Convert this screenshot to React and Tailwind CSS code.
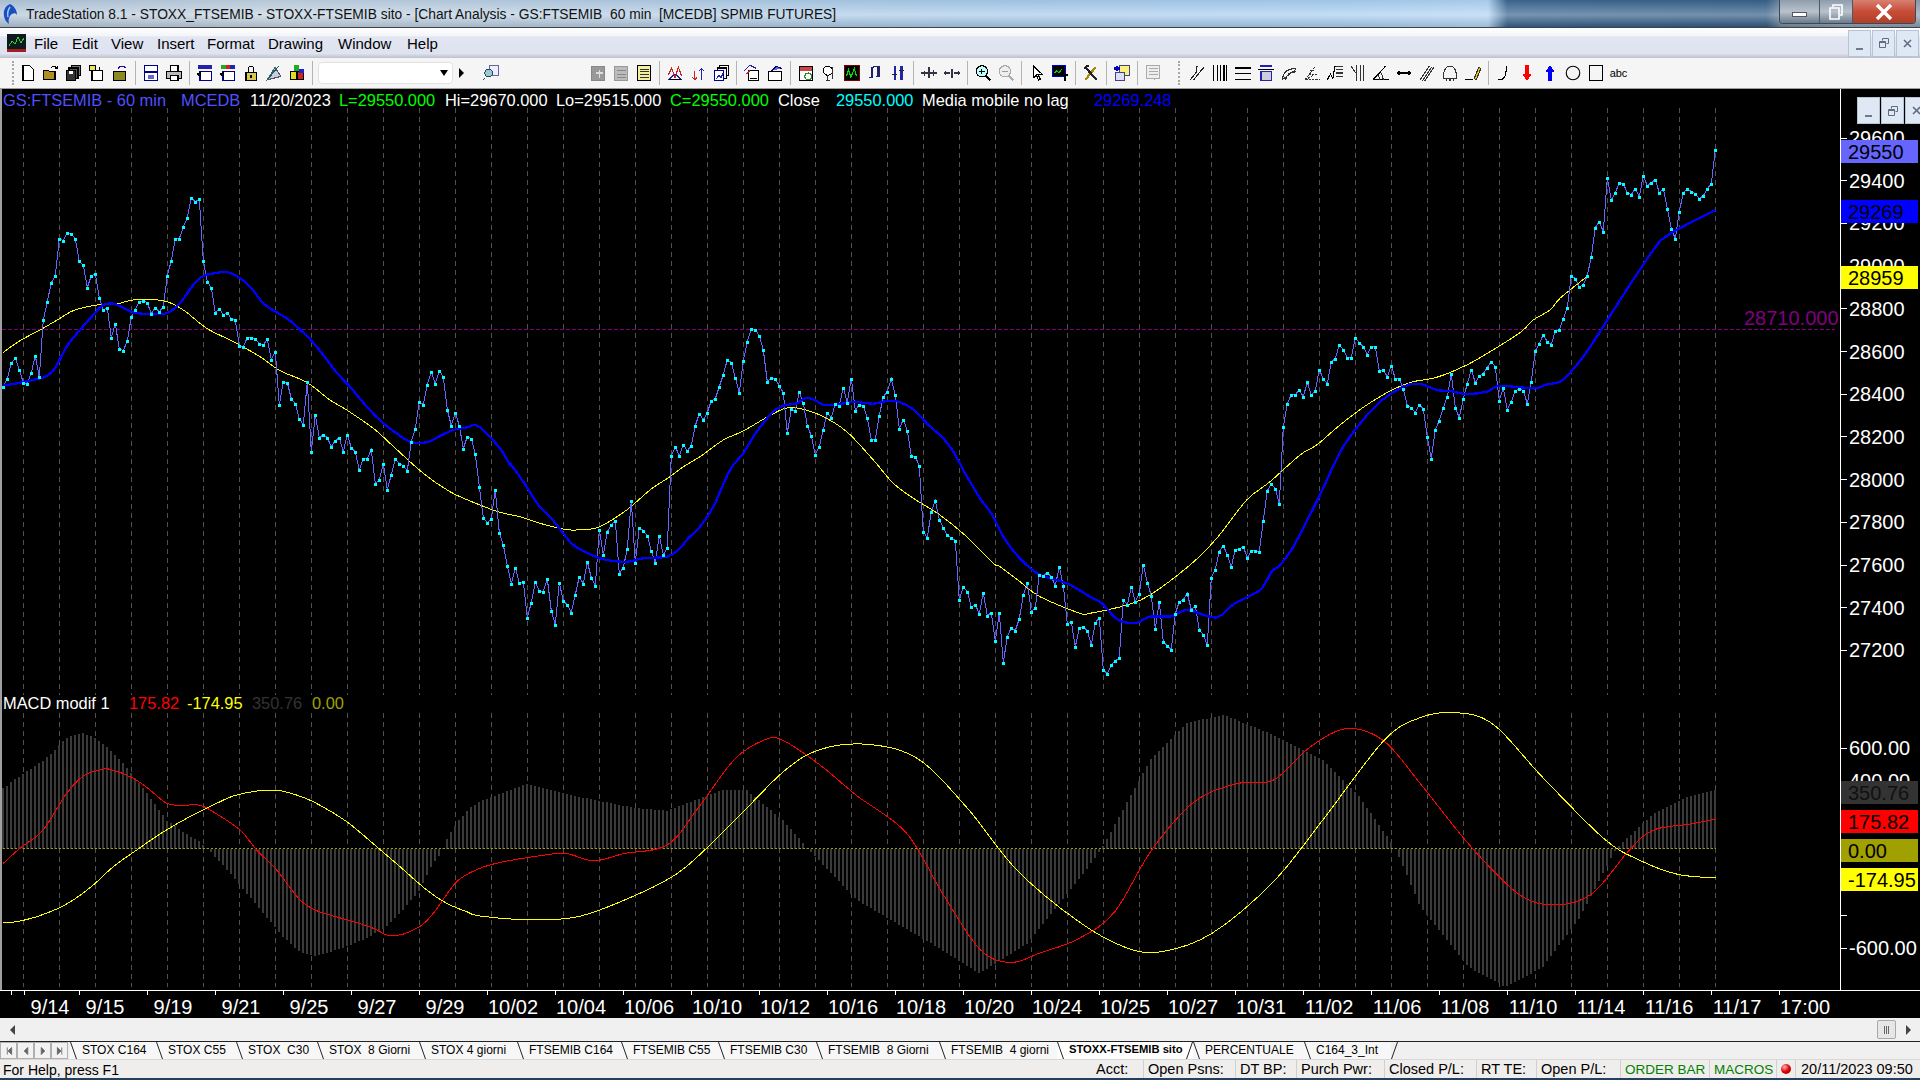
import React from 'react';

// zoom crops were 3x, so these helpers turn traced crop values back into page pixels
const fromZoom = (x0, y0, pts) => pts.map(([x, y]) => [x0 + x / 3, y0 + y / 3]);
const fromOverview = (pts) => pts.map(([x, y]) => [x * 1.2245, y * 1.2245]);
const seg = (x0, y0, start, ys) => ys.map((y, i) => [x0 + (start + 12 * i) / 3, y0 + y / 3]);
const toPoints = (pts) => pts.map(([x, y]) => `${x.toFixed(1)},${y.toFixed(1)}`).join(' ');

// catmull-rom through the traced points, the averages are smooth in the chart
const smooth = (raw) => {
  const pts = raw.filter((p, i) => i === 0 || p[0] > raw[i - 1][0]);
  let d = `M${pts[0][0].toFixed(1)} ${pts[0][1].toFixed(1)}`;
  for (let i = 0; i < pts.length - 1; i++) {
    const p0 = pts[Math.max(i - 1, 0)];
    const p1 = pts[i];
    const p2 = pts[i + 1];
    const p3 = pts[Math.min(i + 2, pts.length - 1)];
    const c1x = p1[0] + (p2[0] - p0[0]) / 6;
    const c1y = p1[1] + (p2[1] - p0[1]) / 6;
    const c2x = p2[0] - (p3[0] - p1[0]) / 6;
    const c2y = p2[1] - (p3[1] - p1[1]) / 6;
    d += `C${c1x.toFixed(1)} ${c1y.toFixed(1)} ${c2x.toFixed(1)} ${c2y.toFixed(1)} ${p2[0].toFixed(1)} ${p2[1].toFixed(1)}`;
  }
  return d;
};

const price = [
  ...seg(0, 180, 10, [620, 596, 548, 535, 569, 608, 611, 578, 527, 591, 420, 365, 308, 287, 176, 182, 158, 161, 176, 244, 255, 323, 287, 281, 353, 389, 383, 473, 431, 507, 512, 483, 410, 389, 365, 362, 368, 401, 383, 395, 380, 287, 242, 176, 176, 141, 113, 53, 65, 57, 242, 305, 323, 398, 386, 404, 398, 416, 420, 497, 500, 473, 473, 477, 491, 495, 477, 539, 515, 675, 605, 608, 656, 671, 716, 734, 605, 816, 704, 773, 764, 773, 800, 782, 773, 815, 764, 803, 815, 870, 836, 836, 809, 911, 899, 851, 929, 884, 836, 851, 857, 872, 785, 746, 665, 674, 614, 575, 611, 572, 590, 689, 737, 698, 737, 806, 770, 776, 821]),
  ...seg(0, 340, 1438, [440, 533, 548, 536, 450, 578, 614, 677, 731, 683, 729]),
  ...seg(500, 310, 70, [816, 923, 878, 816, 843, 845, 806, 902, 944, 818, 872, 884, 908, 854, 800, 821, 755, 803, 827, 659, 734, 665, 645, 632, 791, 773, 716, 572, 758, 653, 662, 677, 722, 758, 677, 734, 713, 437, 410, 437, 404, 422, 407, 347, 311, 329, 308, 272, 266, 230, 194, 149, 158, 203, 248, 152, 95, 56, 59, 77, 119, 215, 203, 206, 227, 248, 368, 298, 302, 247, 278, 347, 377, 434, 410, 359, 308, 323, 281, 287, 233, 278, 206, 302, 284, 287, 323, 389, 389, 317, 260, 245, 206, 254, 356, 329, 362, 437, 440, 467, 665, 683, 605, 572, 629, 653, 675, 683, 692, 870, 830, 845, 890, 884, 911, 848, 917, 908, 992, 908, 1058, 980, 953, 962, 926]),
  ...seg(1000, 310, 70, [855, 818, 905, 893, 794, 797, 788, 800, 827, 770, 827, 941, 935, 1011, 953, 950, 962, 1005, 938, 923, 1079, 1092, 1065, 1053, 1043, 869, 885, 830, 875, 851, 764, 818, 857, 956, 875, 995, 1008, 1019, 911, 875, 869, 851, 899, 887, 959, 974, 1005, 803, 779, 725, 707, 734, 770, 719, 716, 710, 743, 722, 722, 725, 632, 542, 521, 536, 581, 350, 281, 254, 254, 239, 260, 217, 254, 242, 179, 206, 221, 155, 146, 104, 119, 143, 143, 83, 98, 110, 134, 110, 110, 182, 179, 200, 167, 206, 206, 236, 287, 293, 308, 284, 296, 380, 446, 359, 332, 293, 260, 191, 293, 323, 266, 221, 179, 218, 197, 191, 173, 155, 170, 272, 233, 299, 275, 242, 236]),
  ...seg(1300, 130, 670, [782, 821, 755, 662, 641, 614, 635, 644, 602, 600, 566, 533, 437, 446, 470, 464, 437, 380, 293, 275, 305, 143, 209, 188, 158, 161, 188, 194, 176, 200, 137, 167, 158, 149, 188, 176, 236, 296, 326, 245, 188, 176, 185, 191, 206, 197, 176, 161, 60]),
];

const blueMa = [
  ...fromZoom(0, 180, [[10, 616], [40, 612], [70, 606], [120, 595], [140, 588], [165, 565], [200, 500], [240, 450], [275, 410], [310, 375], [345, 372], [400, 397], [450, 402], [490, 402], [510, 395], [540, 370], [580, 315], [610, 288], [650, 279], [680, 276], [710, 288], [750, 320], [790, 370], [830, 397], [870, 422], [930, 478], [970, 525], [1010, 578], [1050, 620], [1100, 680], [1150, 730], [1190, 760], [1230, 785], [1280, 787], [1320, 768], [1360, 750], [1400, 742], [1425, 735]]),
  ...fromZoom(0, 340, [[1450, 270], [1500, 325], [1530, 375]]),
  ...fromZoom(500, 310, [[0, 415], [30, 460], [70, 515], [115, 585], [150, 620], [190, 670], [220, 705], [260, 728], [300, 745], [340, 753], [385, 755], [430, 745], [500, 740], [535, 720], [565, 685], [600, 650], [640, 590], [690, 480], [730, 430], [770, 365], [820, 305], [850, 287], [890, 280], [915, 265], [940, 268], [970, 284], [1010, 284], [1060, 276], [1120, 281], [1160, 273], [1195, 275], [1240, 298], [1280, 340], [1330, 385], [1360, 425], [1390, 480], [1440, 565], [1475, 612], [1510, 680]]),
  ...fromZoom(1000, 310, [[0, 650], [55, 740], [115, 792], [200, 820], [270, 860], [305, 880], [355, 930], [410, 938], [450, 920], [515, 919], [560, 900], [630, 920], [660, 918], [705, 880], [780, 840], [815, 785], [840, 765], [880, 710], [960, 555], [1030, 410], [1130, 285], [1210, 230], [1260, 222], [1310, 240], [1350, 243], [1400, 252], [1460, 245], [1495, 228], [1560, 232]]),
  ...fromZoom(1300, 130, [[710, 775], [735, 765], [780, 755], [810, 728], [850, 680], [900, 605], [970, 495], [1060, 360], [1100, 318], [1190, 268], [1246, 240]]),
];

const yellowMa = [
  ...fromZoom(0, 180, [[10, 517], [60, 482], [120, 450], [180, 415], [220, 392], [290, 375], [350, 372], [400, 360], [490, 362], [550, 390], [620, 445], [700, 485], [780, 530], [840, 572], [920, 607], [990, 660], [1040, 690]]),
  ...fromZoom(0, 340, [[1120, 265], [1170, 310], [1270, 400], [1350, 455], [1420, 487], [1500, 517]]),
  ...fromZoom(500, 310, [[0, 607], [60, 620], [120, 640], [200, 659], [260, 658], [300, 650], [380, 600], [450, 540], [510, 500], [550, 470], [600, 440], [670, 390], [730, 363], [800, 322], [850, 297], [885, 293], [960, 315], [1040, 365], [1120, 450], [1180, 520], [1240, 565], [1320, 615], [1400, 680], [1480, 760]]),
  ...fromZoom(1000, 310, [[0, 770], [60, 815], [120, 860], [240, 910], [270, 910], [380, 885], [450, 855], [570, 765], [650, 685], [740, 570], [810, 515], [900, 435], [950, 405], [1020, 345], [1100, 285], [1180, 238], [1240, 215], [1310, 202], [1400, 165], [1470, 125], [1560, 68]]),
  ...fromZoom(1300, 130, [[700, 570], [750, 540], [780, 505], [860, 440]]),
];

const histEnvelope = [
  ...fromZoom(0, 690, [[10, 296], [40, 272], [80, 245], [130, 212], [165, 182], [185, 155], [210, 140], [250, 130], [290, 145], [330, 178], [380, 230], [420, 280], [460, 335], [500, 390], [550, 425], [600, 455], [625, 476], [660, 515], [700, 560], [750, 620], [800, 680], [850, 740], [900, 785], [940, 798], [980, 790], [1040, 770], [1100, 745], [1160, 710], [1210, 660], [1260, 600], [1300, 520], [1320, 495], [1340, 450], [1370, 400], [1410, 355], [1440, 335]]),
  ...fromOverview([[430, 640], [470, 650], [520, 660], [545, 662], [590, 645], [610, 645], [640, 670], [660, 693], [700, 735], [760, 770], [800, 795], [840, 770], [880, 720], [900, 693], [940, 620], [970, 590], [1000, 584], [1040, 600], [1080, 620], [1110, 650], [1140, 693], [1160, 740], [1200, 790], [1230, 806], [1260, 790], [1290, 750], [1320, 693], [1350, 665], [1380, 650], [1401, 645]]),
];

const macdRed = [
  ...fromZoom(0, 690, [[10, 520], [60, 475], [120, 430], [150, 390], [200, 310], [250, 258], [300, 240], [330, 238], [400, 265], [450, 300], [500, 340], [540, 346], [600, 346], [650, 372], [720, 420], [770, 480], [830, 540], [900, 630], [950, 662], [1000, 678], [1060, 695], [1120, 715], [1175, 738], [1250, 715], [1300, 670], [1370, 575], [1440, 535]]),
  ...fromOverview([[410, 704], [440, 699], [462, 697], [485, 703], [510, 697], [545, 690], [570, 660], [600, 620], [625, 604], [640, 605], [670, 625], [700, 650], [740, 680], [770, 730], [800, 775], [825, 786], [850, 778], [880, 767], [910, 745], [940, 695], [975, 655], [1010, 640], [1040, 637], [1070, 610], [1100, 595], [1130, 605], [1160, 640], [1200, 690], [1240, 730], [1270, 739], [1300, 730], [1330, 695], [1350, 678], [1380, 673], [1401, 669]]),
];

const macdYellow = [
  ...fromZoom(0, 690, [[10, 697], [50, 695], [110, 680], [170, 657], [220, 630], [280, 585], [340, 530], [410, 480], [480, 432], [560, 385], [640, 345], [700, 318], [770, 303], [830, 301], [880, 312], [940, 335], [1040, 395], [1130, 470], [1200, 530], [1280, 600], [1340, 640], [1400, 665], [1440, 678]]),
  ...fromOverview([[430, 751], [470, 749], [510, 735], [555, 712], [600, 670], [640, 630], [670, 612], [710, 608], [750, 620], [790, 660], [830, 710], [880, 752], [920, 774], [950, 777], [990, 762], [1040, 720], [1080, 670], [1130, 605], [1160, 586], [1190, 582], [1220, 592], [1260, 635], [1310, 685], [1340, 703], [1370, 714], [1401, 717]]),
];

const interpolate = (pts, x) => {
  for (let i = 1; i < pts.length; i++) {
    if (x <= pts[i][0]) {
      const [x0, y0] = pts[i - 1];
      const [x1, y1] = pts[i];
      return y0 + ((y1 - y0) * (x - x0)) / (x1 - x0);
    }
  }
  return pts[pts.length - 1][1];
};

const ZERO_Y = 848.7;
const histPath = Array.from({ length: 429 }, (_, i) => {
  const x = 3.33 + 4 * i;
  return `M${Math.round(x)} ${ZERO_Y}V${interpolate(histEnvelope, Math.max(x, 4)).toFixed(1)}`;
}).join('');

const gridXs = Array.from({ length: 48 }, (_, i) => 23.33 + 36 * i);

const priceTicks = [29600, 29400, 29200, 29000, 28800, 28600, 28400, 28200, 28000, 27800, 27600, 27400, 27200].map((p) => ({
  label: String(p),
  y: 138 + (29600 - p) * 0.2135,
}));
const macdTicks = [
  { label: '600.00', y: 748 },
  { label: '400.00', y: 781 },
  { label: '', y: 915 },
  { label: '-600.00', y: 948 },
];
const valueBoxes = [
  { text: '29550', y: 140, cls: 'bg-[#6666ff] text-black' },
  { text: '29269', y: 200, cls: 'bg-[#0000ff] text-black' },
  { text: '28959', y: 266, cls: 'bg-[#ffff00] text-black' },
  { text: '350.76', y: 781, cls: 'bg-[#333333] text-[#111111]' },
  { text: '175.82', y: 810, cls: 'bg-[#ff0000] text-black' },
  { text: '0.00', y: 839, cls: 'bg-[#a0a000] text-black' },
  { text: '-174.95', y: 868, cls: 'bg-[#ffff00] text-black' },
];

const dates = ['9/15', '9/19', '9/21', '9/25', '9/27', '9/29', '10/02', '10/04', '10/06', '10/10', '10/12', '10/16', '10/18', '10/20', '10/24', '10/25', '10/27', '10/31', '11/02', '11/06', '11/08', '11/10', '11/14', '11/16', '11/17', '17:00'];

const legendCells = [
  ['w-[178px] text-[#5050ff]', 'GS:FTSEMIB - 60 min'],
  ['w-[69px] text-[#5050ff]', 'MCEDB'],
  ['w-[89px] text-white', '11/20/2023'],
  ['w-[106px] text-[#00ff00]', 'L=29550.000'],
  ['w-[111px] text-white', 'Hi=29670.000'],
  ['w-[114px] text-white', 'Lo=29515.000'],
  ['w-[108px] text-[#00ff00]', 'C=29550.000'],
  ['w-[58px] text-white', 'Close'],
  ['w-[86px] text-[#00ffff]', '29550.000'],
  ['w-[172px] text-white', 'Media mobile no lag'],
  ['w-[90px] text-[#0000ff]', '29269.248'],
];
const macdLegend = [
  ['w-[126px] text-white', 'MACD modif 1'],
  ['w-[58px] text-[#ff0000]', '175.82'],
  ['w-[65px] text-[#ffff00]', '-174.95'],
  ['w-[60px] text-[#333333]', '350.76'],
  ['w-[40px] text-[#a0a000]', '0.00'],
];

const menus = [
  ['w-[38px]', 'File'],
  ['w-[39px]', 'Edit'],
  ['w-[46px]', 'View'],
  ['w-[50px]', 'Insert'],
  ['w-[61px]', 'Format'],
  ['w-[70px]', 'Drawing'],
  ['w-[69px]', 'Window'],
  ['w-[40px]', 'Help'],
];

const tabs = [
  ['w-[86px]', 'STOX C164'],
  ['w-[80px]', 'STOX C55'],
  ['w-[81px]', 'STOX  C30'],
  ['w-[102px]', 'STOX  8 Giorni'],
  ['w-[98px]', 'STOX 4 giorni'],
  ['w-[104px]', 'FTSEMIB C164'],
  ['w-[97px]', 'FTSEMIB C55'],
  ['w-[98px]', 'FTSEMIB C30'],
  ['w-[123px]', 'FTSEMIB  8 Giorni'],
  ['w-[118px]', 'FTSEMIB  4 giorni'],
  ['w-[136px]', 'STOXX-FTSEMIB sito', true],
  ['w-[111px]', 'PERCENTUALE'],
  ['w-[87px]', 'C164_3_Int'],
];

const statusCells = [
  ['w-[52px] text-black', 'Acct:'],
  ['w-[92px] text-black', 'Open Psns:'],
  ['w-[61px] text-black', 'DT BP:'],
  ['w-[88px] text-black', 'Purch Pwr:'],
  ['w-[92px] text-black', 'Closed P/L:'],
  ['w-[60px] text-black', 'RT TE:'],
  ['w-[84px] text-black', 'Open P/L:'],
  ['w-[89px] text-[#008000] text-[13.5px]', 'ORDER BAR'],
  ['w-[67px] text-[#008000] text-[13.5px]', 'MACROS'],
];

function Ic({ children }) {
  return (
    <div className="w-[23px] h-full flex items-center justify-center shrink-0">
      <svg width="18" height="18" viewBox="0 0 16 16" fill="none" stroke="#000" strokeWidth="1" shapeRendering="crispEdges">
        {children}
      </svg>
    </div>
  );
}

function Sep() {
  return (
    <div className="w-[8px] h-full flex items-center justify-center shrink-0">
      <div className="w-px h-[24px] bg-[#b4b4b4]" />
    </div>
  );
}

function Grip() {
  return <div className="w-[2px] h-[24px] shrink-0 border-l-2 border-dotted border-[#a8a8a8]" />;
}

const ICONS = {
  doc: <path d="M3.5 1.5h6l3 3v10h-9z" fill="#fff" />,
  open: <><path d="M1.5 13.5v-8h4l1 1h5v7z" fill="#b09020" /><path d="M8 3.5c1.5-2 4-2 5 .5M13.5 2v2h-2" /></>,
  save: <><rect x="5.5" y="1.5" width="8" height="9" fill="#777" /><rect x="3.5" y="3.5" width="8" height="9" fill="#555" /><rect x="1.5" y="5.5" width="8" height="9" fill="#333" /><rect x="3.5" y="6" width="4" height="3" fill="#fff" stroke="none" /></>,
  notes: <><path d="M3.5 5.5h9v9h-9z" fill="#fff" /><path d="M1.5 1.5h5v4h-5z" fill="#f0e060" /><path d="M10 5V2.5" /></>,
  box: <><rect x="2.5" y="6.5" width="10" height="8" fill="#8a8a20" /><path d="M6 4c2-2.5 5-2.5 7-.5" stroke="#20a" /></>,
  preview: <><rect x="2.5" y="1.5" width="11" height="13" fill="#fff" stroke="#008" /><rect x="2.5" y="6" width="11" height="2" fill="#008" stroke="none" /><rect x="5" y="10" width="6" height="3" fill="#66c" stroke="none" /></>,
  printer: <><path d="M4.5 1.5h7v5h-7z" fill="#fff" /><path d="M1.5 6.5h13v6h-13z" fill="#bbb" /><path d="M4.5 10.5h7v4h-7z" fill="#fff" /></>,
  winA: <><rect x="3.5" y="6.5" width="10" height="8" fill="#fff" stroke="#008" /><rect x="2" y="1" width="12" height="3" fill="#22a" stroke="none" /><path d="M1 9l3-2v4z" fill="#008" /></>,
  winB: <><rect x="3.5" y="6.5" width="10" height="8" fill="#fff" stroke="#008" /><rect x="2" y="1" width="4" height="3" fill="#2a2" stroke="none" /><rect x="6" y="1" width="4" height="3" fill="#c22" stroke="none" /><rect x="10" y="1" width="4" height="3" fill="#22a" stroke="none" /><path d="M1 9l3-2v4z" fill="#008" /></>,
  lock: <><rect x="3.5" y="7.5" width="9" height="7" fill="#d8c850" /><path d="M5.5 7.5v-3a2.5 2.5 0 0 1 5 0v3" /><rect x="7" y="10" width="2" height="2" fill="#000" stroke="none" /></>,
  draw: <><path d="M2 14L9 3l5 8z" fill="#ccd" stroke="#556" /><path d="M3 13l9-11" stroke="#066" /></>,
  cubes: <><rect x="5" y="1" width="5" height="6" fill="#2a2" stroke="none" /><rect x="2" y="7" width="6" height="7" fill="#dd2" stroke="#000" /><rect x="8" y="7" width="6" height="7" fill="#c22" stroke="#000" /><rect x="10" y="4" width="4" height="4" fill="#22c" stroke="none" /></>,
  search: <><rect x="6.5" y="1.5" width="8" height="9" fill="#eef" stroke="#669" /><circle cx="6" cy="8" r="3.5" fill="#9cc" stroke="#246" /><path d="M3 12l-2 2" stroke="#246" /></>,
  grayA: <><rect x="2.5" y="2.5" width="11" height="12" fill="#999" stroke="#888" /><path d="M9 5v7M6 8h6" stroke="#ddd" /></>,
  grayB: <><rect x="2.5" y="2.5" width="11" height="12" fill="#bbb" stroke="#999" /><path d="M4 6h8M4 9h8M4 12h8" stroke="#888" /></>,
  calc: <><rect x="2.5" y="1.5" width="11" height="13" fill="#f4f0a0" /><path d="M4 4.5h8M4 7h8M4 9.5h8M4 12h8" stroke="#333" /></>,
  chartA: <><path d="M2 14h12" /><path d="M2 10l3-6 3 8 3-9 3 8" stroke="#c22" /><path d="M2 14l6-5 6 5" stroke="#22a" /></>,
  arrowsUD: <><path d="M5 6v8M3 12l2 2 2-2" stroke="#c22" /><path d="M11 14V4M9 6l2-2 2 2" stroke="#22a" /></>,
  pages: <><rect x="6.5" y="1.5" width="8" height="9" fill="#fff" /><rect x="4.5" y="3.5" width="8" height="9" fill="#eef" /><rect x="2.5" y="5.5" width="8" height="9" fill="#fff" stroke="#008" /><path d="M4 13l2-3 2 2 2-4" stroke="#22a" /></>,
  chartPage: <><rect x="4.5" y="5.5" width="9" height="9" fill="#fff" /><path d="M1 6l5-5 6 3" stroke="#22a" /><path d="M3 9l3-3" stroke="#c22" /><path d="M6 13h6" /></>,
  folderUp: <><rect x="2.5" y="6.5" width="11" height="8" fill="#fff" /><path d="M5 6l4-4 5 2" stroke="#008" fill="#66c" /></>,
  cal: <><rect x="2.5" y="2.5" width="11" height="12" fill="#fff" /><rect x="3" y="3" width="10" height="3" fill="#c44" stroke="none" /><circle cx="10" cy="11" r="3" fill="#fff" stroke="#383" /></>,
  bulb: <><circle cx="7" cy="6" r="4" fill="#fff" /><path d="M7 10v5M5 15h4M11 3v10" stroke="#333" /></>,
  blackChart: <><rect x="1" y="1" width="14" height="14" fill="#000" stroke="#700" /><path d="M3 11l2-6 2 7 3-8 2 7" stroke="#0d0" /></>,
  music: <><path d="M5 3v9M11 2v9" stroke="#226" strokeWidth="2" /><path d="M3 12h3M9 11h3M5 3l6-1" stroke="#226" /></>,
  fork: <><path d="M5 2v12M11 2v12" stroke="#22a" strokeWidth="2" /><path d="M3 9h4M9 6h4" stroke="#222" /></>,
  hTicks: <path d="M1 8h14M4 6v5M8 3v9M12 5v6" stroke="#334" />,
  hArrows: <path d="M1 8h5M10 8h5M3 6L1 8l2 2M13 6l2 2-2 2M8 4v8" stroke="#334" />,
  zoomIn: <><circle cx="7" cy="6.5" r="5" fill="#bff" stroke="#000" /><path d="M4.5 6.5h5M7 4v5" stroke="#000" /><path d="M10.5 10.5l4 4" strokeWidth="2" /></>,
  zoomOut: <><circle cx="7" cy="6.5" r="5" fill="#eee" stroke="#aaa" /><path d="M4.5 6.5h5" stroke="#999" /><path d="M10.5 10.5l4 4" stroke="#aaa" strokeWidth="2" /></>,
  pointer: <path d="M4.5 1.5v11l3-2.5 2 4.5 1.5-1-2-4 3.5-.5z" fill="#fff" />,
  chartT: <><rect x="1" y="1" width="12" height="10" fill="#000" stroke="#00c" /><path d="M3 8l2-2 2 2 3-4" stroke="#0d0" /><path d="M10 10h5M12.5 10v5" strokeWidth="2" /></>,
  tools: <><path d="M3 14L12 3" stroke="#a80" strokeWidth="2" /><path d="M3 3l10 11" stroke="#222" strokeWidth="2" /><path d="M2 4l4-3" stroke="#222" strokeWidth="2" /></>,
  docPlus: <><rect x="5.5" y="1.5" width="9" height="9" fill="#f8f080" stroke="#447" /><rect x="2.5" y="7.5" width="8" height="7" fill="#ddf" stroke="#447" /><path d="M1 4h5M3.5 1.5v5" stroke="#00c" strokeWidth="2" /></>,
  msg: <><rect x="2.5" y="1.5" width="11" height="11" fill="#eee" stroke="#aaa" /><path d="M4 4h8M4 6.5h8M4 9h8M9 12.5v2" stroke="#aaa" /></>,
  pen: <path d="M2 14L7 8l1-6M5 14l9-11" stroke="#222" />,
  vBars: <path d="M2.5 1v14M5.5 1v14M8.5 1v14M11.5 1v14M14 1v14" />,
  hBars: <path d="M1 3.5h14M1 8.5h14M1 13.5h14" />,
  fib: <><rect x="3" y="1" width="10" height="2" fill="#22a" stroke="none" /><path d="M1 4.5h14" /><rect x="3.5" y="6.5" width="9" height="8" fill="#ccd" stroke="#22a" /></>,
  arcs: <path d="M2 14c1-8 7-10 12-10M5 14c1-5 5-7 9-7M2 14L14 5" stroke="#333" />,
  fan: <path d="M2 14h13M2 14L11 2M2 14l7-4M6 6h4M5 9h7" stroke="#333" strokeDasharray="2 1" />,
  speed: <><path d="M1 14l3-5 2 4 2-11" /><path d="M9 2h6M9 5h6M9 8h6M9 11h6" stroke="#333" /></>,
  andrew: <path d="M2 2l4 6M7 1v14M10 1v14M13 1v14" stroke="#333" />,
  angle: <><path d="M1 14h14M1 14L12 2" /><path d="M7 14c0-2-1-3-2-4M10 14c0-3-1-4-2-6" stroke="#333" /></>,
  hDouble: <path d="M2 8h12M4 6L2 8l2 2M12 6l2 2-2 2" />,
  parallel: <path d="M2 14L10 2M6 15L14 3M4 15l8-12" stroke="#333" />,
  bell: <path d="M2 13c0-7 2-11 6-11s6 4 6 11M5 13v2M8 12v3M11 13v2M2 13h12" stroke="#333" />,
  pencil: <><path d="M1 14h7" /><path d="M9 13L13 3l2 1-4 10z" fill="#f0c020" stroke="#333" /></>,
  hook: <path d="M3 14c5 0 7-2 7-12" />,
  downRed: <polygon points="6.5,1 9.5,1 9.5,9 12,9 8,15 4,9 6.5,9" fill="#f00" stroke="none" />,
  upBlue: <polygon points="6.5,15 9.5,15 9.5,7 12,7 8,1 4,7 6.5,7" fill="#00f" stroke="none" />,
  circle: <circle cx="8" cy="8" r="6" shapeRendering="auto" />,
  square: <rect x="2.5" y="1.5" width="11" height="13" />,
};

function Toolbar() {
  const icon = (k) => <Ic key={k}>{ICONS[k]}</Ic>;
  return (
    <div className="h-[31px] flex items-center pl-[12px] bg-[#f5f5f5] border-b border-[#9e9e9e] shrink-0">
      <Grip />
      <div className="w-[2px] shrink-0" />
      {['doc', 'open', 'save', 'notes', 'box'].map(icon)}
      <Sep />
      {['preview', 'printer'].map(icon)}
      <Sep />
      {['winA', 'winB', 'lock', 'draw', 'cubes'].map(icon)}
      <Sep />
      <div className="w-[135px] h-[22px] ml-[2px] shrink-0 bg-white border border-[#e2e2e2] rounded-sm flex items-center justify-end pr-[4px]">
        <div className="w-0 h-0 border-x-[4px] border-x-transparent border-t-[6px] border-t-black" />
      </div>
      <div className="ml-[6px] w-0 h-0 shrink-0 border-y-[5px] border-y-transparent border-l-[5px] border-l-black" />
      <div className="w-[15px] shrink-0" />
      {icon('search')}
      <div className="w-[84px] shrink-0" />
      {['grayA', 'grayB', 'calc'].map(icon)}
      <Sep />
      {['chartA', 'arrowsUD', 'pages'].map(icon)}
      <Sep />
      {['chartPage', 'folderUp'].map(icon)}
      <Sep />
      {['cal', 'bulb', 'blackChart', 'music', 'fork'].map(icon)}
      <Sep />
      {['hTicks', 'hArrows'].map(icon)}
      <Sep />
      {['zoomIn', 'zoomOut'].map(icon)}
      <Sep />
      {['pointer', 'chartT'].map(icon)}
      <Sep />
      {icon('tools')}
      <Sep />
      {icon('docPlus')}
      <Sep />
      {icon('msg')}
      <div className="w-[14px] shrink-0" />
      <Grip />
      <div className="w-[5px] shrink-0" />
      {['pen', 'vBars', 'hBars', 'fib', 'arcs', 'fan', 'speed', 'andrew', 'angle', 'hDouble', 'parallel', 'bell', 'pencil'].map(icon)}
      <Sep />
      {['hook', 'downRed', 'upBlue', 'circle', 'square'].map(icon)}
      <div className="w-[23px] text-center text-[11px] text-black shrink-0">abc</div>
    </div>
  );
}

function MdiButtons({ compact }) {
  const base = 'w-[23px] h-[27px] shrink-0 flex items-center justify-center bg-[#dfe8f5] border border-[#b8c4d4] text-[#606c80]';
  return (
    <div className={compact ? 'flex gap-px' : 'flex gap-px h-[27px]'}>
      <div className={`${base} items-end pb-[6px]`}>
        <div className="w-[7px] h-[2px] bg-[#707a8a]" />
      </div>
      <div className={base}>
        <svg width="10" height="10" viewBox="0 0 10 10" fill="none" stroke="#606c80">
          <path d="M3.5 2.5v-2h6v5h-2M.5 3.5h6v6h-6zM.5 4.5h6" />
        </svg>
      </div>
      <div className={base}>
        <svg width="9" height="9" viewBox="0 0 9 9" stroke="#606c80" strokeWidth="1.6">
          <path d="M1 1l7 7M8 1L1 8" />
        </svg>
      </div>
    </div>
  );
}

function Plot() {
  return (
    <svg width="1838" height="901" viewBox="2 89 1838 901" className="block" fill="none" shapeRendering="crispEdges">
      {gridXs.map((x) => (
        <g key={x} stroke="#505050" strokeDasharray="5 4">
          <line x1={x} x2={x} y1="108" y2="695" />
          <line x1={x} x2={x} y1="713" y2="987" />
        </g>
      ))}
      <line x1="2" x2="1835" y1="329.5" y2="329.5" stroke="#800080" strokeDasharray="4 2" />
      <path d={histPath} stroke="#3a3a3a" strokeWidth="2" />
      <line x1="3" x2="1716" y1={ZERO_Y} y2={ZERO_Y} stroke="#a0a000" strokeDasharray="2 2" />
      <path d={smooth(yellowMa)} stroke="#ffff00" strokeWidth="1" />
      <polyline points={toPoints(price)} stroke="#6666ff" strokeWidth="1" />
      <path d={smooth(blueMa)} stroke="#0000ff" strokeWidth="2.3" />
      <path d={smooth(macdRed)} stroke="#ff0000" strokeWidth="1" />
      <path d={smooth(macdYellow)} stroke="#ffff00" strokeWidth="1" />
      <g fill="#00ffff">
        {price.map(([x, y]) => (
          <rect key={x} x={Math.round(x) - 1.5} y={Math.round(y) - 1.5} width="3" height="3" />
        ))}
      </g>
    </svg>
  );
}

function YAxis() {
  return (
    <div className="relative w-[80px] h-full border-l border-white">
      {[...priceTicks, ...macdTicks].map((t) => (
        <div key={t.y} className="absolute left-0 flex items-center h-[20px] text-[20px] leading-[20px] text-white" style={{ top: t.y - 89 - 10 }}>
          <div className="w-[6px] h-px bg-white mr-[2px]" />
          {t.label}
        </div>
      ))}
      {valueBoxes.map((b) => (
        <div key={b.text} className={`absolute left-0 w-[77px] h-[23px] pl-[7px] flex items-center text-[20px] ${b.cls}`} style={{ top: b.y - 89 }}>
          {b.text}
        </div>
      ))}
      <div className="absolute left-[16px] top-[8px]">
        <MdiButtons compact />
      </div>
    </div>
  );
}

function XAxis() {
  return (
    <div className="flex h-[28px] border-t border-white text-[20px] leading-[20px] text-white pl-[11px] overflow-hidden">
      <div className="relative w-[13px] shrink-0">
        <div className="absolute left-0 top-0 w-px h-[4px] bg-white" />
      </div>
      <div className="relative w-[55px] shrink-0 pt-[6px]">
        <div className="absolute left-0 top-0 w-px h-[4px] bg-white" />
        <div className="w-[52px] text-center">9/14</div>
      </div>
      {dates.map((d) => (
        <div key={d} className="relative w-[68px] shrink-0 pt-[6px]">
          <div className="absolute left-0 top-0 w-px h-[4px] bg-white" />
          <div className="w-[52px] text-center">{d}</div>
        </div>
      ))}
    </div>
  );
}

function Slash({ back }) {
  return (
    <svg width="7" height="17" viewBox="0 0 7 17" className="shrink-0 block" stroke="#222">
      <path d={back ? 'M0.5 0L6.5 17' : 'M6.5 0L0.5 17'} />
    </svg>
  );
}

function Tabs() {
  return (
    <div className="h-[18px] flex items-center bg-[#f0f0f0] border-t border-[#222] text-[12px] text-black shrink-0">
      <div className="w-[68px] h-full flex shrink-0">
        {['M6 4v8M11 4L7 8l4 4z', 'M10 4L6 8l4 4z', 'M6 4l4 4-4 4z', 'M10 4v8M5 4l4 4-4 4z'].map((d) => (
          <div key={d} className="w-[17px] h-full bg-[#f2f2f2] border border-[#b0b0b0] flex items-center justify-center">
            <svg width="14" height="14" viewBox="0 0 16 16" fill="#666" stroke="#666">
              <path d={d} />
            </svg>
          </div>
        ))}
      </div>
      <div className="w-[2px] shrink-0" />
      {tabs.map(([w, label, active]) => (
        <div key={label} className={`${w} h-full flex items-center shrink-0 ${active ? 'bg-white font-bold text-[11.2px]' : 'bg-[#f7f7f7]'}`}>
          <Slash back />
          <span className="ml-[5px] pb-[2px] whitespace-pre">{label}</span>
          {active && <div className="ml-auto"><Slash /></div>}
        </div>
      ))}
      <Slash />
    </div>
  );
}

function StatusBar() {
  return (
    <div className="h-[19px] flex items-center bg-[#f0eeec] border-t border-[#d8d8d8] text-[14.5px] text-black shrink-0">
      <span className="pl-[3px] pt-[2px] text-[14px] w-[1092px] shrink-0">For Help, press F1</span>
      {statusCells.map(([w, label]) => (
        <div key={label} className={`${w} h-full flex items-center justify-start pl-[4px] pt-[2px] border-r border-[#d0d0d0] whitespace-nowrap shrink-0`}>
          {label}
        </div>
      ))}
      <div className="w-[19px] h-full flex items-center justify-center border-r border-[#d0d0d0] shrink-0">
        <div className="w-[10px] h-[10px] rounded-full bg-[radial-gradient(circle_at_35%_30%,#ffb0b0,#e00000_50%,#800000)]" />
      </div>
      <div className="pl-[5px] pt-[2px] whitespace-nowrap">20/11/2023 09:50</div>
    </div>
  );
}

export default function App() {
  return (
    <div className="w-[1920px] h-[1080px] flex flex-col overflow-hidden bg-black font-['Liberation_Sans',Arial,sans-serif]">
      {/* title bar */}
      <div className="relative h-[28px] flex items-center shrink-0 border-b border-[#3a4450] bg-[linear-gradient(90deg,#b4c6d8_0%,#c6d4e0_15%,#b8cee2_30%,#a8cbea_50%,#a9d0f3_70%,#b2d6f5_77.5%,#2a5682_78.5%,#234e78_92%,#6c8296_92.8%,#8898a8_96%)]">
        <div className="absolute inset-0 bg-[linear-gradient(180deg,rgba(120,150,180,0.2)_0%,rgba(235,242,250,0.4)_55%,rgba(70,80,90,0.2)_100%)]" />
        <svg width="18" height="22" viewBox="0 0 18 22" className="relative ml-[1px] mr-[7px] shrink-0" fill="none">
          <path d="M9 1C4 3 2 8 3 13c.5 3 2 6 5 8-1-4 0-8 3-10 2-1.5 4-1 5 1 0-5-3-9-7-11z" fill="#1a4fc0" />
          <path d="M9 4c-2 3-3 6-2 10" stroke="#9cc8ff" strokeWidth="1.5" />
        </svg>
        <span className="relative pt-[4px] text-[13.8px] text-[#111] whitespace-pre">TradeStation 8.1 - STOXX_FTSEMIB - STOXX-FTSEMIB sito - [Chart Analysis - GS:FTSEMIB  60 min  [MCEDB] SPMIB FUTURES]</span>
        <div className="absolute right-[4px] top-0 flex h-[24px] rounded-b-[4px] overflow-hidden border border-t-0 border-[#3c4a58]">
          <div className="w-[40px] flex items-end justify-center pb-[6px] bg-[linear-gradient(180deg,#8e9cac,#b8c2cc_50%,#6c7c8c)] border-r border-[#4c5a68]">
            <div className="w-[15px] h-[5px] bg-white border border-[#556]" />
          </div>
          <div className="w-[33px] flex items-center justify-center bg-[linear-gradient(180deg,#8e9cac,#b8c2cc_50%,#6c7c8c)] border-r border-[#4c5a68]">
            <svg width="16" height="16" viewBox="0 0 16 16" fill="none" stroke="#fff" strokeWidth="1.6">
              <path d="M5 3V1h9v10h-2M2 4h9v11H2z" />
            </svg>
          </div>
          <div className="w-[62px] flex items-center justify-center bg-[linear-gradient(180deg,#d88070,#c84c38_50%,#b04028)]">
            <svg width="20" height="16" viewBox="0 0 20 16" stroke="#fff" strokeWidth="3.5">
              <path d="M3 1l14 14M17 1L3 15" />
            </svg>
          </div>
        </div>
      </div>

      {/* menu bar */}
      <div className="h-[30px] flex items-center pl-[7px] shrink-0 bg-[linear-gradient(180deg,#ffffff_0%,#f4f5f8_25%,#e2e6f2_30%,#dfe3f1_85%,#bcc0c8_100%)]">
        <svg width="19" height="18" viewBox="0 0 19 18" className="mr-[8px] shrink-0" shapeRendering="crispEdges">
          <rect width="19" height="18" fill="#101820" />
          <rect y="15" width="19" height="3" fill="#a02020" />
          <path d="M2 12l3-5 3 3 3-7 3 6 3-5" fill="none" stroke="#30d030" />
        </svg>
        {menus.map(([w, label]) => (
          <span key={label} className={`${w} pt-[2px] text-[15px] text-black shrink-0`}>{label}</span>
        ))}
        <div className="ml-auto mr-[1px]">
          <MdiButtons />
        </div>
      </div>

      <Toolbar />

      {/* chart */}
      <div className="flex-1 flex flex-col min-h-0 bg-black">
        <div className="relative h-[901px] flex shrink-0">
          <div className="w-[2px] bg-[#a0a0a0] shrink-0" />
          <div className="w-[1838px] shrink-0">
            <Plot />
          </div>
          <YAxis />
          <div className="absolute left-[3px] top-[1.5px] flex h-[20px] items-center text-[16.4px] whitespace-nowrap">
            {legendCells.map(([cls, text]) => (
              <span key={text} className={`${cls} shrink-0`}>{text}</span>
            ))}
          </div>
          <div className="absolute left-[3px] top-[604.5px] flex h-[20px] items-center text-[16.4px] whitespace-nowrap">
            {macdLegend.map(([cls, text]) => (
              <span key={text} className={`${cls} shrink-0`}>{text}</span>
            ))}
          </div>
          <div className="absolute left-[1744px] top-[219px] text-[20px] leading-[20px] text-[#800080]">28710.000</div>
        </div>
        <XAxis />
      </div>

      {/* horizontal scroll bar */}
      <div className="h-[23px] flex items-center bg-[#f0f0f0] shrink-0 pl-[10px] pr-[9px]">
        <div className="w-0 h-0 border-y-[5px] border-y-transparent border-r-[5px] border-r-[#444]" />
        <div className="ml-auto w-[19px] h-[19px] bg-[#e6e6e6] border border-[#a8a8a8] rounded-[2px] flex items-center justify-center gap-px">
          <div className="w-px h-[8px] bg-[#666]" />
          <div className="w-px h-[8px] bg-[#666]" />
          <div className="w-px h-[8px] bg-[#666]" />
        </div>
        <div className="ml-[10px] w-0 h-0 border-y-[5px] border-y-transparent border-l-[5px] border-l-[#444]" />
      </div>

      <Tabs />
      <StatusBar />
      <div className="h-[2px] bg-[#24405c] shrink-0" />
    </div>
  );
}
